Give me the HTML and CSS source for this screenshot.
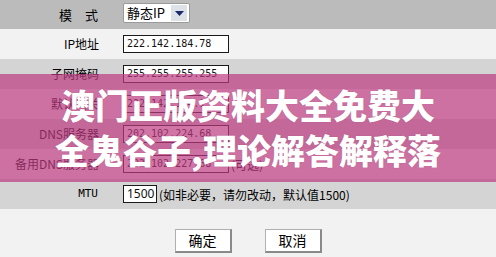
FILE: index.html
```html
<!DOCTYPE html>
<html lang="zh">
<head>
<meta charset="utf-8">
<link rel="stylesheet" href="styles.css">
</head>
<body>
<div class="page">
  <div class="form">
    <div class="row row-head">
      <div class="label">模　式</div>
      <div class="field">
        <div class="select"><span class="select-text">静态IP</span><span class="select-btn"><svg width="9" height="5" viewBox="0 0 9 5"><path d="M0 0H9L4.5 5Z" fill="#1b2a6b"/></svg></span></div>
      </div>
    </div>
    <div class="row row-light">
      <div class="label">IP地址</div>
      <div class="field"><div class="input">222.142.184.78</div></div>
    </div>
    <div class="row row-mid">
      <div class="label">子网掩码</div>
      <div class="field"><div class="input">255.255.255.255</div></div>
    </div>
    <div class="row row-light">
      <div class="label">默认网关</div>
      <div class="field"><div class="input">222.142.184.1</div></div>
    </div>
    <div class="row row-mid">
      <div class="label">DNS服务器</div>
      <div class="field"><div class="input">202.102.224.68</div></div>
    </div>
    <div class="row row-light">
      <div class="label">备用DNS服务器</div>
      <div class="field"><div class="input">202.102.227.68</div><span class="note">(可选)</span></div>
    </div>
    <div class="row row-mid">
      <div class="label label-mono">MTU</div>
      <div class="field"><div class="input input-small">1500</div><span class="note">(如非必要，请勿改动，默认值1500)</span></div>
    </div>
    <div class="actions">
      <div class="btn">确定</div>
      <div class="btn">取消</div>
    </div>
  </div>
  <div class="overlay">
    <div class="overlay-line">澳门正版资料大全免费大</div>
    <div class="overlay-line">全鬼谷子,理论解答解释落</div>
  </div>
</div>
</body>
</html>
```

FILE: styles.css
```css
html, body {
  margin: 0;
  padding: 0;
}
body {
  width: 496px;
  height: 257px;
  overflow: hidden;
  background: #f2f2f2;
  font-family: "Noto Sans CJK SC", "Noto Sans", sans-serif;
  font-size: 12px;
  color: #000;
}
.page {
  position: relative;
  width: 496px;
  height: 257px;
}
.form {
  display: flex;
  flex-direction: column;
}
.row {
  display: flex;
  align-items: center;
  height: 30px;
}
.row-head {
  height: 29px;
  background: #bbbbbb;
}
.row-light {
  background: #f2f2f2;
}
.row-mid {
  background: #d4d4d4;
}
.label {
  width: 99px;
  text-align: right;
  line-height: 14px;
  white-space: nowrap;
}
.row-head .label {
  font-size: 13px;
  padding-right: 1px;
  width: 98px;
}
.label-mono {
  font-family: "DejaVu Sans Mono", monospace;
  font-size: 11px;
  padding-right: 1px;
  width: 98px;
}
.field {
  margin-left: 24px;
  display: flex;
  align-items: center;
}
.select {
  box-sizing: border-box;
  width: 67px;
  height: 20px;
  margin-top: -3px;
  background: #fff;
  border: 1px solid #9a9a9a;
  border-radius: 2px;
  display: flex;
  align-items: center;
  justify-content: space-between;
  padding-left: 3px;
  padding-right: 2px;
}
.select-text {
  font-size: 13px;
  line-height: 16px;
}
.select-btn {
  width: 16px;
  height: 16px;
  background: #dde1e8;
  display: flex;
  align-items: center;
  justify-content: center;
}
.input {
  box-sizing: border-box;
  width: 106px;
  height: 18px;
  background: #fff;
  border: 1px solid #1a1a1a;
  font-family: "DejaVu Sans Mono", monospace;
  font-size: 10px;
  line-height: 16px;
  padding-left: 3px;
  color: #111;
}
.input-small {
  width: 34px;
  font-family: "Noto Sans", sans-serif;
  font-size: 12px;
  padding-left: 3px;
}
.note {
  margin-left: 2px;
  font-size: 12px;
  white-space: nowrap;
}
.actions {
  height: 48px;
  background: #f2f2f2;
  display: flex;
  justify-content: center;
  align-items: flex-start;
  gap: 33px;
  padding-top: 20px;
  box-sizing: border-box;
}
.btn {
  box-sizing: border-box;
  width: 57px;
  height: 24px;
  background: #fff;
  border: 1px solid #b0b0b0;
  border-right: 2px solid #8a8a8a;
  border-bottom: 2px solid #8a8a8a;
  font-size: 14px;
  line-height: 21px;
  text-align: center;
}
.overlay {
  position: absolute;
  left: 0;
  right: 0;
  top: 74px;
  height: 108px;
  background: rgba(188, 58, 128, 0.7);
  display: flex;
  flex-direction: column;
  align-items: center;
  justify-content: center;
  padding-bottom: 2px;
  box-sizing: border-box;
}
.overlay-line {
  color: #fff;
  font-family: "Noto Sans CJK SC", sans-serif;
  font-weight: 900;
  font-size: 34px;
  line-height: 45px;
  white-space: nowrap;
  text-shadow: 0 0 1px rgba(120, 30, 80, 0.4);
}
```
